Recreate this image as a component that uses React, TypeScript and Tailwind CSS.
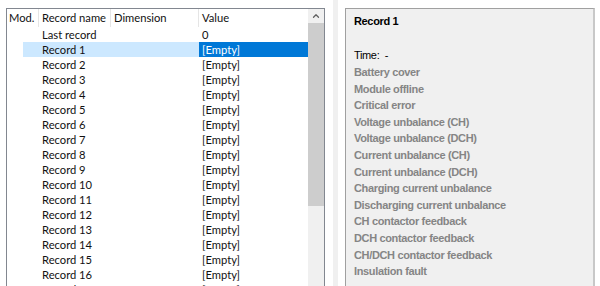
import { ChevronUp } from "lucide-react";

const faults = [
  "Battery cover",
  "Module offline",
  "Critical error",
  "Voltage unbalance (CH)",
  "Voltage unbalance (DCH)",
  "Current unbalance (CH)",
  "Current unbalance (DCH)",
  "Charging current unbalance",
  "Discharging current unbalance",
  "CH contactor feedback",
  "DCH contactor feedback",
  "CH/DCH contactor feedback",
  "Insulation fault",
];

const records = [
  { name: "Last record", value: "0" },
  ...Array.from({ length: 17 }, (_, i) => ({ name: `Record ${i + 1}`, value: "[Empty]" })),
];

export default function App() {
  return (
    <div className="w-[600px] h-[286px] overflow-hidden bg-white flex items-start pt-[8px] font-['Lato',sans-serif] text-[11.2px] text-[#111] whitespace-nowrap">
      {/* Record list */}
      <div className="ml-[6px] w-[319px] h-[300px] border border-[#828790] flex">
        <div className="w-[301px] flex flex-col">
          {/* Header */}
          <div className="h-[18px] flex items-center leading-none">
            <div className="w-[32px] pl-[2px] border-r border-[#e5e5e5] h-full flex items-center">Mod.</div>
            <div className="w-[72px] pl-[3px] border-r border-[#e5e5e5] h-full flex items-center">Record name</div>
            <div className="w-[88px] pl-[3px] border-r border-[#e5e5e5] h-full flex items-center">Dimension</div>
            <div className="flex-1 pl-[3px] h-full flex items-center">Value</div>
          </div>
          {/* Rows */}
          {records.map((r, i) => {
            const selected = i === 1;
            return (
              <div key={r.name} className="h-[15px] flex items-center leading-none">
                <div className="w-[16px] h-full" />
                <div className={`w-[176px] h-full flex items-center ${selected ? "bg-[#cce8ff]" : ""}`}>
                  <div className="w-[16px]" />
                  <div className="pl-[3px]">{r.name}</div>
                </div>
                <div className={`flex-1 h-full flex items-center pl-[3px] ${selected ? "bg-[#0078d7] text-white" : ""}`}>
                  {r.value}
                </div>
              </div>
            );
          })}
        </div>
        {/* Scrollbar */}
        <div className="w-[16px] bg-[#f0f0f0] flex flex-col">
          <div className="h-[14px] flex items-center justify-center">
            <ChevronUp className="w-[10px] h-[10px] text-[#606060]" strokeWidth={3} />
          </div>
          <div className="h-[183px] bg-[#cdcdcd]" />
        </div>
      </div>

      {/* Splitter */}
      <div className="ml-[8px] w-[5px] h-[286px] -mt-[8px] bg-[#f0f0f0]" />

      {/* Detail panel */}
      <div className="ml-[7px] w-[250px] h-[300px] bg-[#f0f0f0] border-l border-t border-[#a0a0a0] border-r-2 border-r-[#c8c8c8] pl-[8px] pt-[4px] font-['Liberation_Sans',sans-serif] text-[11px] text-black tracking-[-0.35px]">
        <div className="font-bold h-[17px] flex items-center">Record 1</div>
        <div className="h-[17px]" />
        <div className="h-[17px] flex items-center">Time:&nbsp; -</div>
        <div className="flex flex-col font-bold text-[#858585]">
          {faults.map((f) => (
            <div key={f} className="h-[16.6px] flex items-center">
              {f}
            </div>
          ))}
        </div>
      </div>
    </div>
  );
}
